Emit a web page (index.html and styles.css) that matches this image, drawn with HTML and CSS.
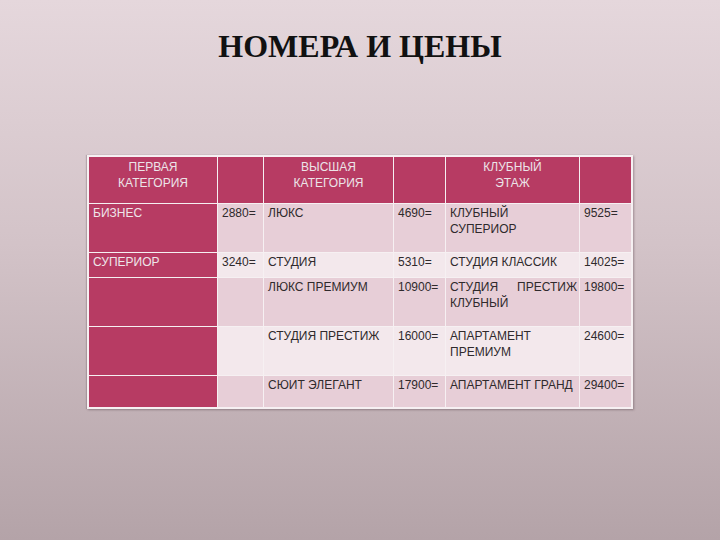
FILE: index.html
```html
<!DOCTYPE html>
<html lang="ru">
<head>
<meta charset="utf-8">
<title>Номера и цены</title>
<link rel="stylesheet" href="styles.css">
</head>
<body>
<div class="slide">
  <h1 class="title">НОМЕРА И ЦЕНЫ</h1>
  <div class="price-table">
    <div class="cell head">ПЕРВАЯ<br>КАТЕГОРИЯ</div>
    <div class="cell head"></div>
    <div class="cell head">ВЫСШАЯ<br>КАТЕГОРИЯ</div>
    <div class="cell head"></div>
    <div class="cell head">КЛУБНЫЙ<br>ЭТАЖ</div>
    <div class="cell head"></div>

    <div class="cell side">БИЗНЕС</div>
    <div class="cell dark">2880=</div>
    <div class="cell dark">ЛЮКС</div>
    <div class="cell dark">4690=</div>
    <div class="cell dark">КЛУБНЫЙ СУПЕРИОР</div>
    <div class="cell dark">9525=</div>

    <div class="cell side">СУПЕРИОР</div>
    <div class="cell light">3240=</div>
    <div class="cell light">СТУДИЯ</div>
    <div class="cell light">5310=</div>
    <div class="cell light">СТУДИЯ КЛАССИК</div>
    <div class="cell light">14025=</div>

    <div class="cell side"></div>
    <div class="cell dark"></div>
    <div class="cell dark">ЛЮКС ПРЕМИУМ</div>
    <div class="cell dark">10900=</div>
    <div class="cell dark">СТУДИЯ ПРЕСТИЖ КЛУБНЫЙ</div>
    <div class="cell dark">19800=</div>

    <div class="cell side"></div>
    <div class="cell light"></div>
    <div class="cell light">СТУДИЯ ПРЕСТИЖ</div>
    <div class="cell light">16000=</div>
    <div class="cell light">АПАРТАМЕНТ ПРЕМИУМ</div>
    <div class="cell light">24600=</div>

    <div class="cell side"></div>
    <div class="cell dark"></div>
    <div class="cell dark">СЮИТ ЭЛЕГАНТ</div>
    <div class="cell dark">17900=</div>
    <div class="cell dark">АПАРТАМЕНТ ГРАНД</div>
    <div class="cell dark">29400=</div>
  </div>
</div>
</body>
</html>
```

FILE: styles.css
```css
html, body {
  margin: 0;
  padding: 0;
}

body {
  width: 720px;
  height: 540px;
  overflow: hidden;
}

.slide {
  width: 720px;
  height: 540px;
  box-sizing: border-box;
  padding-top: 27px;
  background: linear-gradient(to bottom, #e5d7dc 0%, #d3c3c8 45%, #b4a3a8 100%);
  display: flex;
  flex-direction: column;
  align-items: center;
}

.title {
  margin: 0;
  font-family: "Liberation Serif", "Times New Roman", serif;
  font-weight: bold;
  font-size: 32px;
  line-height: 38px;
  color: #111;
  text-align: center;
}

.price-table {
  margin-top: 90px;
  display: grid;
  grid-template-columns: 128px 45px 129px 51px 133px 51px;
  grid-template-rows: 46px 48px 24px 48px 48px 31px;
  column-gap: 1px;
  row-gap: 1px;
  background: #f6f0f2;
  border: 2px solid #f6f0f2;
  box-shadow: 1px 1px 2px rgba(90, 70, 80, 0.45), -1px 0 1px rgba(90, 70, 80, 0.25);
  font-family: "Liberation Sans", Arial, sans-serif;
  font-size: 12px;
  line-height: 16px;
  color: #2f2a2c;
}

.cell {
  padding: 1px 2px 0 4px;
  text-align: justify;
  overflow: hidden;
}

.head {
  background: #b73b63;
  color: #ece4e8;
  text-align: center;
  padding: 2px 2px 0 2px;
  margin-bottom: -2px;
  border-bottom: 2px solid #f6f0f2;
}

.side {
  background: #b73b63;
  color: #eee6ea;
}

.dark {
  background: #e7ced7;
}

.light {
  background: #f3e8ec;
}
```
